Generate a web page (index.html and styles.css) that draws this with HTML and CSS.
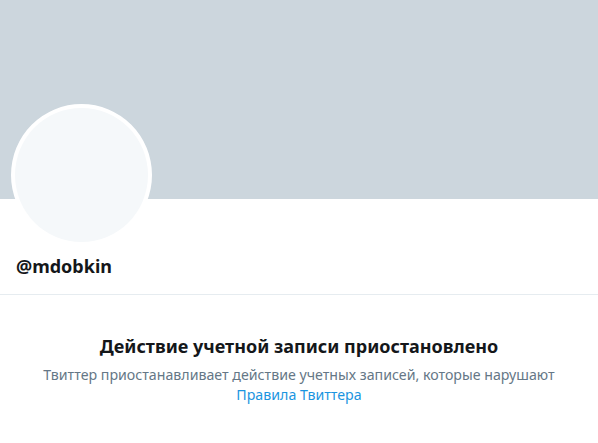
FILE: index.html
```html
<!DOCTYPE html>
<html lang="ru">
<head>
<meta charset="utf-8">
<link rel="stylesheet" href="styles.css">
</head>
<body>
<div class="page">
  <div class="banner"></div>
  <div class="profile">
    <div class="avatar"></div>
    <div class="handle">@mdobkin</div>
  </div>
  <div class="divider"></div>
  <div class="notice">
    <h1 class="notice-title">Действие учетной записи приостановлено</h1>
    <p class="notice-text">Твиттер приостанавливает действие учетных записей, которые нарушают <a class="notice-link" href="#">Правила Твиттера</a></p>
  </div>
</div>
</body>
</html>
```
FILE: styles.css
```css
html, body {
  margin: 0;
  padding: 0;
  background: #fff;
}
body {
  font-family: "Noto Sans", "Open Sans", sans-serif;
  color: #14171a;
}
.page {
  width: 598px;
}
.banner {
  height: 199px;
  background: #ccd6dd;
}
.profile {
  position: relative;
  padding: 56px 16px 0;
  height: 39px;
}
.avatar {
  position: absolute;
  left: 11px;
  top: -95px;
  width: 133px;
  height: 134px;
  border-radius: 50%;
  background: #f5f8fa;
  border: 4px solid #fff;
}
.handle {
  font-weight: 700;
  font-size: 18px;
  line-height: 22px;
}
.divider {
  height: 1px;
  background: #e6ecf0;
}
.notice {
  text-align: center;
  padding: 38px 20px 0;
}
.notice-title {
  margin: 0;
  font-size: 18px;
  font-weight: 700;
  line-height: 26px;
}
.notice-text {
  margin: 6px 0 0;
  font-size: 14.2px;
  line-height: 20px;
  color: #657786;
}
.notice-link {
  color: #1b95e0;
  text-decoration: none;
}
```
